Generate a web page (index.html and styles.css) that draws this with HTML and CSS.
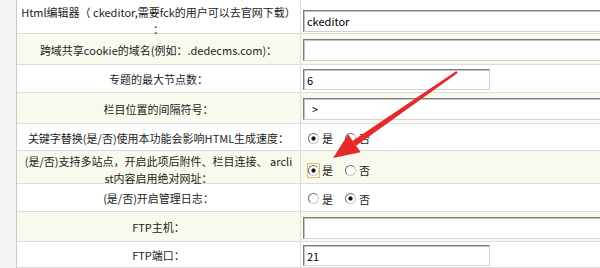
FILE: index.html
```html
<!DOCTYPE html>
<html lang="zh-CN">
<head>
<meta charset="utf-8">
<title>系统基本参数</title>
<link rel="stylesheet" href="styles.css">
</head>
<body>
<div class="page">
  <div class="side"></div>
  <div class="config">
    <div class="row row-editor">
      <div class="label">Html编辑器（ ckeditor,需要fck的用户可以去官网下载）<br>：</div>
      <div class="value"><input class="txt wide" type="text" value="ckeditor"></div>
    </div>
    <div class="row alt row-field">
      <div class="label">跨域共享cookie的域名(例如：.dedecms.com)：</div>
      <div class="value"><input class="txt wide" type="text" value=""></div>
    </div>
    <div class="row row-num">
      <div class="label">专题的最大节点数：</div>
      <div class="value"><input class="txt short" type="text" value="6"></div>
    </div>
    <div class="row alt row-field">
      <div class="label">栏目位置的间隔符号：</div>
      <div class="value"><input class="txt wide" type="text" value="  &gt;"></div>
    </div>
    <div class="row row-opt">
      <div class="label">关键字替换(是/否)使用本功能会影响HTML生成速度：</div>
      <div class="value">
        <label class="opt"><input class="radio" type="radio" name="keyword" checked>是</label>
        <label class="opt"><input class="radio" type="radio" name="keyword">否</label>
      </div>
    </div>
    <div class="row alt row-multi">
      <div class="label">(是/否)支持多站点，开启此项后附件、栏目连接、 arcli<br>st内容启用绝对网址：</div>
      <div class="value">
        <label class="opt"><span class="focus"><input class="radio" type="radio" name="multi" checked></span>是</label>
        <label class="opt"><input class="radio" type="radio" name="multi">否</label>
      </div>
    </div>
    <div class="row row-log">
      <div class="label">(是/否)开启管理日志：</div>
      <div class="value">
        <label class="opt"><input class="radio" type="radio" name="log">是</label>
        <label class="opt"><input class="radio" type="radio" name="log" checked>否</label>
      </div>
    </div>
    <div class="row alt row-host">
      <div class="label">FTP主机：</div>
      <div class="value"><input class="txt wide" type="text" value=""></div>
    </div>
    <div class="row row-port">
      <div class="label">FTP端口：</div>
      <div class="value"><input class="txt short" type="text" value="21"></div>
    </div>
  </div>
  <svg class="arrow" width="600" height="268" viewBox="0 0 600 268" aria-hidden="true">
    <polygon points="457.7,73 456.3,71 352.7,140.7 356.1,145.7" fill="#e42a2b"/>
    <polygon points="333,158 348.1,134.2 360.7,152.2" fill="#e42a2b"/>
  </svg>
</div>
</body>
</html>
```

FILE: styles.css
```css
html, body {
  margin: 0;
  padding: 0;
  background: #ffffff;
}

body {
  width: 600px;
  height: 268px;
  overflow: hidden;
  font-family: "Noto Sans CJK SC", "Noto Sans", sans-serif;
  font-size: 11px;
  color: #1c1c1c;
}

.page {
  position: relative;
  display: flex;
  width: 600px;
  height: 268px;
  overflow: hidden;
}

.side {
  flex: 0 0 16px;
  background: #f3f3f3;
  border-right: 1px solid #cacaca;
}

.config {
  flex: 0 0 700px;
}

.row {
  display: grid;
  grid-template-columns: 284px 1fr;
  box-sizing: border-box;
  border-bottom: 1px solid #dcdcdc;
  background: #ffffff;
}

.row.alt {
  background: #f9faee;
}

.row-editor { height: 34px; }
.row-field  { height: 31px; }
.row-num    { height: 28px; }
.row-opt    { height: 27px; }
.row-multi  { height: 33px; }
.row-log    { height: 28px; }
.row-host   { height: 30px; }
.row-port   { height: 26px; }

.label {
  display: flex;
  align-items: center;
  justify-content: center;
  text-align: center;
  line-height: 17px;
  padding-top: 2px;
  border-right: 1px solid #dcdcdc;
  white-space: nowrap;
}

.row-editor .label,
.row-editor .value {
  padding-top: 4px;
}

.value {
  display: flex;
  align-items: center;
  padding-left: 2px;
  padding-top: 2px;
}

.txt {
  box-sizing: border-box;
  height: 22px;
  margin: 0;
  padding: 0 3px;
  border: 1px solid;
  border-color: #7b7b7b #d2d2d2 #d2d2d2 #7b7b7b;
  box-shadow: inset 1px 1px 0 #c4c4c4;
  background: #ffffff;
  font-family: "Noto Sans CJK SC", "Noto Sans", sans-serif;
  font-size: 11px;
  color: #000000;
  white-space: pre;
}

.txt.wide {
  width: 340px;
}

.txt.short {
  width: 187px;
  height: 21px;
}

.opt {
  display: inline-flex;
  align-items: center;
  margin-right: 7px;
  font-size: 11px;
  line-height: 14px;
}

.radio {
  -webkit-appearance: none;
  appearance: none;
  box-sizing: border-box;
  width: 11px;
  height: 11px;
  margin: 0 3px 0 5px;
  border-radius: 50%;
  border: 1px solid;
  border-color: #6c6c6c #c9c9c9 #c9c9c9 #6c6c6c;
  background: #ffffff;
}

.radio:checked {
  background: radial-gradient(circle, #111111 0 1.8px, #ffffff 2.4px);
}

.focus {
  display: inline-flex;
  margin: 0 2px 0 4px;
  padding: 1px 0;
  border: 1px solid #d6c17a;
  background: #fffbe8;
}

.focus .radio {
  margin: 0;
}

.arrow {
  position: absolute;
  top: 0;
  left: 0;
  pointer-events: none;
}
```
